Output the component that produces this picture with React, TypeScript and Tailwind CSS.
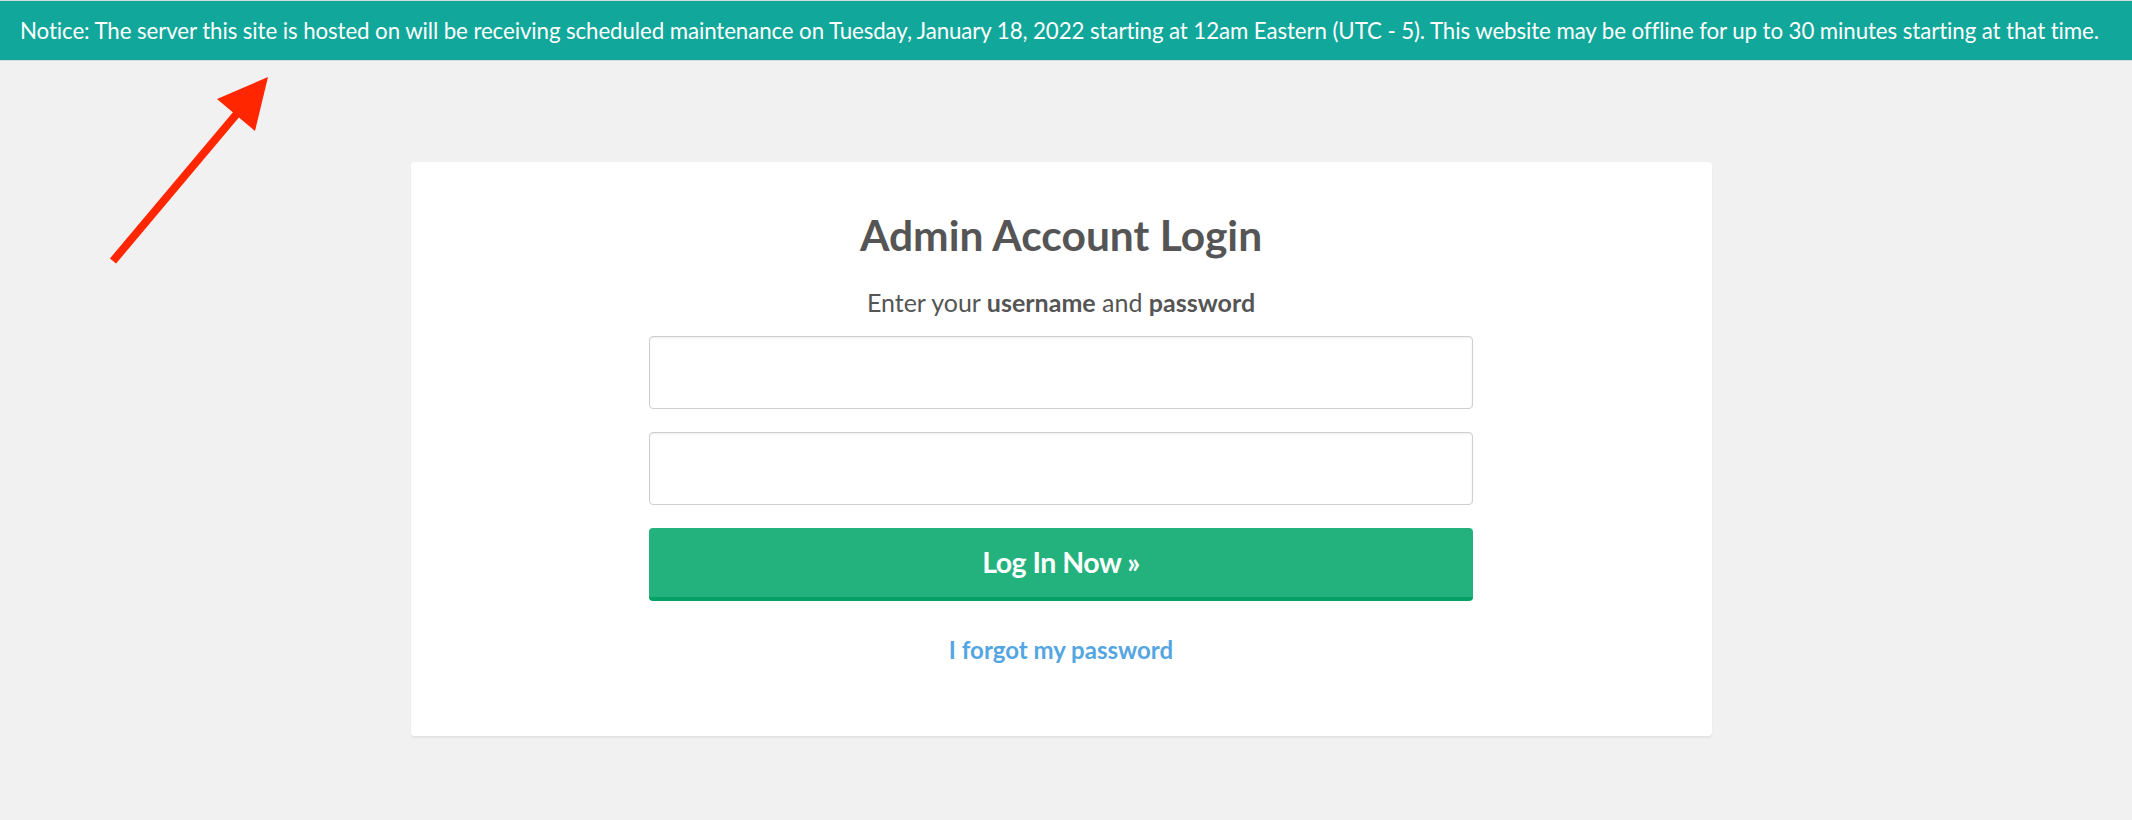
import React from "react";

const font = { fontFamily: "Lato, 'Open Sans', sans-serif" };

function Arrow() {
  // red annotation arrow pointing at the notice banner
  return (
    <svg className="absolute left-0 top-0 pointer-events-none" width="300" height="280" viewBox="0 0 300 280">
      <line x1="113" y1="261" x2="240" y2="110" stroke="#ff2600" strokeWidth="8" />
      <polygon points="268,77 217,99 255,131" fill="#ff2600" />
    </svg>
  );
}

export default function App() {
  return (
    <div className="relative min-h-screen bg-[#f1f1f1]" style={font}>
      <div className="h-[61px] flex items-center bg-[#11a79a] border-t border-b border-[#d5dedd] px-[20px]">
        <p className="text-white text-[22.3px] whitespace-nowrap tracking-[-0.1px]">
          Notice: The server this site is hosted on will be receiving scheduled maintenance on Tuesday, January 18, 2022 starting at 12am Eastern (UTC - 5). This website may be offline for up to 30 minutes starting at that time.
        </p>
      </div>

      <div className="flex justify-center pt-[101px] pr-[10px]">
        <div className="w-[1301px] bg-white rounded-[4px] shadow-[0_2px_2px_rgba(0,0,0,0.06)] flex flex-col items-center pt-[49px] pb-[71px]">
          <h1 className="text-[42.5px] leading-[48px] font-bold text-[#555]">Admin Account Login</h1>
          <p className="mt-[27px] text-[25px] leading-[32px] text-[#555]">
            Enter your <span className="font-bold">username</span> and <span className="font-bold">password</span>
          </p>
          <div className="mt-[18px] w-[824px] flex flex-col gap-[23px]">
            <input className="h-[73px] w-full rounded-[4px] border border-[#cfcfcf] bg-white shadow-[inset_0_1px_2px_rgba(0,0,0,0.08)] outline-none" />
            <input type="password" className="h-[73px] w-full rounded-[4px] border border-[#cfcfcf] bg-white shadow-[inset_0_1px_2px_rgba(0,0,0,0.08)] outline-none" />
            <button className="h-[73px] w-full rounded-[4px] bg-[#23b27e] border-b-[4px] border-[#07a065] text-white text-[28.5px] font-bold tracking-[-0.5px]">
              Log In Now »
            </button>
          </div>
          <a href="#" className="mt-[34px] text-[24px] leading-[30px] font-bold text-[#54a6e2]">I forgot my password</a>
        </div>
      </div>

      <Arrow />
    </div>
  );
}
